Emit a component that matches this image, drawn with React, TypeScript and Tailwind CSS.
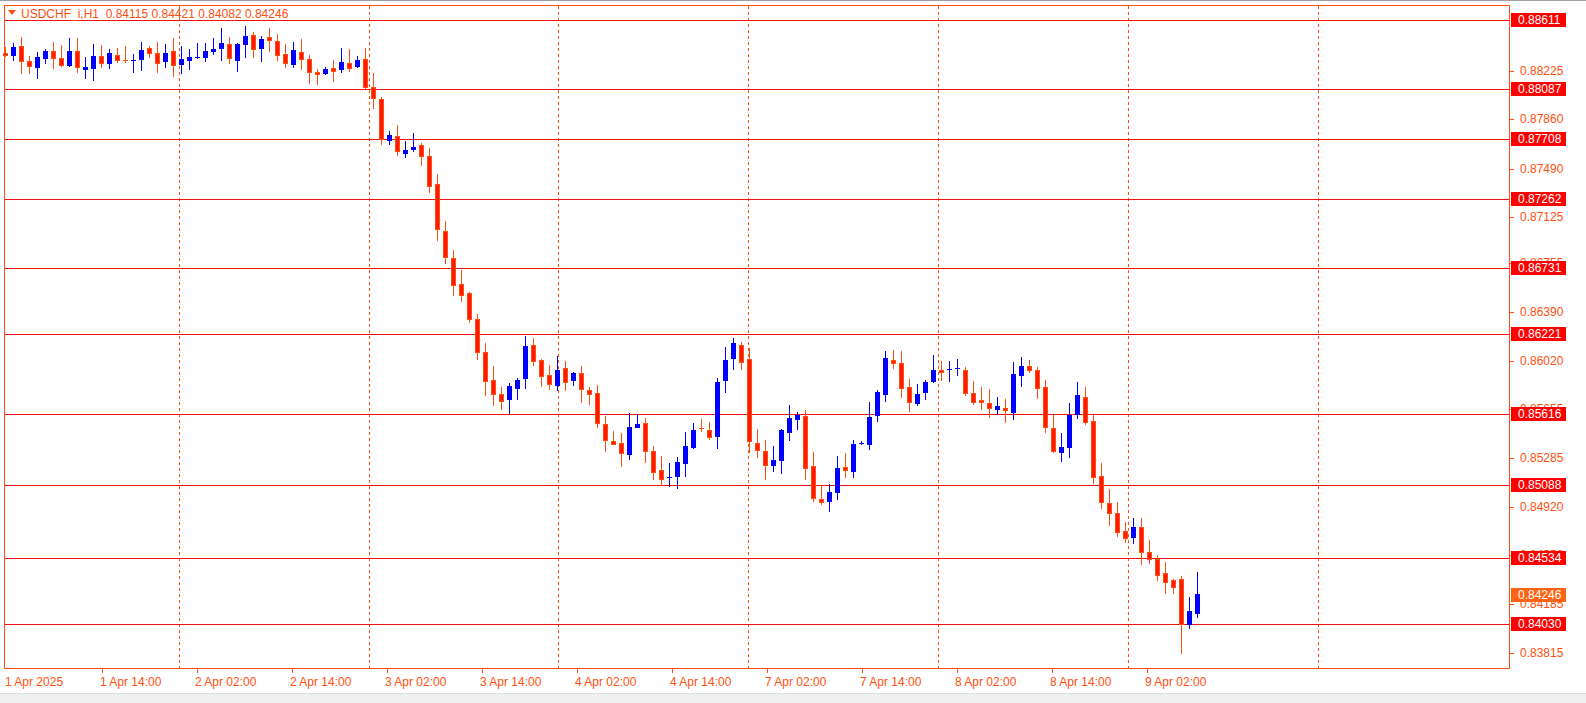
import React from "react";

const pts: [number, number][] = [
  [5, 50], [40, 58], [80, 60], [120, 58], [150, 50], [180, 55], [220, 52], [260, 42], [290, 55], [320, 70], [345, 62], [362, 68], [375, 100], [385, 145], [400, 140], [420, 155], [432, 205], [440, 245], [456, 285], [465, 318], [480, 360], [497, 400], [512, 380], [527, 345], [545, 375], [570, 380], [590, 400], [607, 455], [625, 440], [640, 425], [662, 490], [680, 465], [695, 420], [710, 435], [720, 355], [733, 340], [742, 355], [750, 445], [765, 475], [780, 430], [795, 395], [805, 460], [820, 510], [835, 480], [850, 455], [870, 420], [885, 350], [900, 385], [915, 400], [930, 370], [945, 375], [960, 370], [975, 410], [990, 405], [1005, 405], [1018, 365], [1030, 370], [1045, 420], [1055, 465], [1068, 425], [1080, 380], [1095, 495], [1110, 520], [1130, 530], [1145, 560], [1160, 570], [1175, 580], [1185, 622], [1200, 595],
];

function interp(x: number) {
  for (let i = 0; i < pts.length - 1; i++) {
    const [x0, y0] = pts[i];
    const [x1, y1] = pts[i + 1];
    if (x >= x0 && x <= x1) return y0 + ((y1 - y0) * (x - x0)) / (x1 - x0);
  }
  return pts[pts.length - 1][1];
}

let seed = 11;
function rnd() {
  seed = (seed * 9301 + 49297) % 233280;
  return seed / 233280;
}

type C = { x: number; o: number; c: number; h: number; l: number };
const candles: C[] = [];
let prev = 50;
for (let x = 5; x <= 1199; x += 8) {
  const base = interp(x);
  const c = base + (rnd() - 0.5) * 22;
  const o = prev + (rnd() - 0.5) * 4;
  const h = Math.min(o, c) - rnd() * 14 - 1;
  const l = Math.max(o, c) + rnd() * 14 + 1;
  candles.push({ x, o, c, h, l });
  prev = c;
}
candles[candles.length - 1] = { x: 1197, o: 612, c: 593, h: 571, l: 617 };
candles[candles.length - 2] = { x: 1189, o: 623, c: 610, h: 596, l: 628 };
candles[candles.length - 3] = { x: 1181, o: 578, c: 623, h: 575, l: 653 };

const vlines = [179, 369, 558, 748, 938, 1128, 1318];
const hlines: [number, string][] = [
  [19, "0.88611"], [88, "0.88087"], [138, "0.87708"], [198, "0.87262"], [267, "0.86731"], [333, "0.86221"], [413, "0.85616"], [484, "0.85088"], [557, "0.84534"], [623, "0.84030"],
];
const ticks: [number, string][] = [
  [70, "0.88225"], [118, "0.87860"], [168, "0.87490"], [216, "0.87125"], [262, "0.86755"], [311, "0.86390"], [360, "0.86020"], [408, "0.85655"], [457, "0.85285"], [506, "0.84920"], [554, "0.84550"], [603, "0.84185"], [652, "0.83815"],
];
const times = ["1 Apr 2025", "1 Apr 14:00", "2 Apr 02:00", "2 Apr 14:00", "3 Apr 02:00", "3 Apr 14:00", "4 Apr 02:00", "4 Apr 14:00", "7 Apr 02:00", "7 Apr 14:00", "8 Apr 02:00", "8 Apr 14:00", "9 Apr 02:00"];

const OR = "#ff4f0f";

export default function App() {
  return (
    <div className="w-[1586px] h-[703px] bg-white overflow-hidden border-t border-[#a0a0a0]" style={{ fontFamily: '"Liberation Sans", Arial, sans-serif' }}>
      <svg width="1586" height="702" className="block" fontFamily='"Liberation Sans", Arial, sans-serif'>
        <rect x="4.5" y="4.5" width="1505" height="663" fill="white" stroke={OR} />
        {vlines.map((x) => (
          <line key={x} x1={x + 0.5} y1={5} x2={x + 0.5} y2={667} stroke={OR} strokeDasharray="3 3" />
        ))}
        {hlines.map(([y]) => (
          <line key={y} x1={5} y1={y + 0.5} x2={1509} y2={y + 0.5} stroke="#ee1111" />
        ))}
        {candles.map((k, i) => {
          const bull = k.c < k.o;
          const top = Math.round(Math.min(k.o, k.c));
          const hgt = Math.max(1, Math.round(Math.abs(k.o - k.c)));
          const col = bull ? "#0000ff" : OR;
          return (
            <g key={i}>
              <line x1={k.x + 0.5} x2={k.x + 0.5} y1={Math.round(k.h)} y2={Math.round(k.l)} stroke={col} />
              {hgt <= 1 ? (
                <line x1={k.x - 2} x2={k.x + 3} y1={top + 0.5} y2={top + 0.5} stroke={col} />
              ) : (
                <rect x={k.x - 2 + 0.5} y={top + 0.5} width={4} height={hgt} fill={bull ? "#0000ff" : "#ff1a00"} stroke={col} />
              )}
            </g>
          );
        })}
        <path d="M8 9 L16 9 L12 14 Z" fill={OR} />
        <text x="21" y="17" fontSize="12" fill={OR} xmlSpace="preserve">USDCHF_i,H1  0.84115 0.84421 0.84082 0.84246</text>
        {ticks.map(([y, t]) => (
          <g key={t}>
            <line x1={1510} x2={1514} y1={y + 0.5} y2={y + 0.5} stroke={OR} />
            <text x="1520" y={y + 4} fontSize="12" fill={OR}>{t}</text>
          </g>
        ))}
        {hlines.map(([y, t]) => (
          <g key={t}>
            <rect x="1511" y={y - 7} width="55" height="14" fill="#ff0000" />
            <text x="1518" y={y + 4} fontSize="12" fill="white">{t}</text>
          </g>
        ))}
        <rect x="1511" y="587" width="55" height="14" fill="#ff6414" />
        <text x="1518" y="598" fontSize="12" fill="white">0.84246</text>
        {times.map((t, i) => {
          const x = i === 0 ? 5 : 100 + (i - 1) * 95;
          return (
            <g key={t}>
              {i > 0 && <line x1={x + 2.5} x2={x + 2.5} y1={668} y2={672} stroke={OR} />}
              <text x={x} y={685} fontSize="12" fill={OR}>{t}</text>
            </g>
          );
        })}
        <rect x="0" y="692" width="1586" height="10" fill="#f0f0f0" />
        <line x1="0" x2="1586" y1="692.5" y2="692.5" stroke="#dcdcdc" />
      </svg>
    </div>
  );
}
